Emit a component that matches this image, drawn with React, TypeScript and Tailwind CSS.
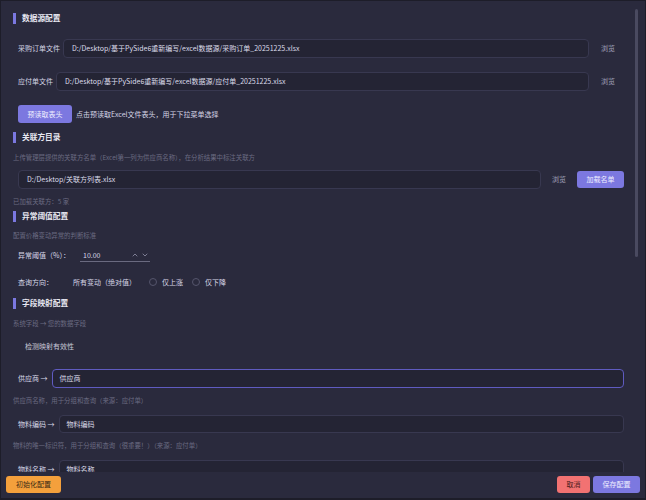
import { ChevronDown, ChevronUp } from 'lucide-react'

const font = { fontFamily: '"Noto Sans CJK SC", "Noto Sans", sans-serif' }

function SectionTitle({ title, className = '' }: { title: string; className?: string }) {
  return (
    <div className={`flex h-[12px] items-center ${className}`}>
      <span className="h-[11px] w-[3px] bg-[#7b78e0]" />
      <span className="ml-[6px] text-[7.7px] font-bold leading-[12px] text-[#e8e8f2]">{title}</span>
    </div>
  )
}

function Desc({ text, className = '' }: { text: string; className?: string }) {
  return <p className={`h-[10px] text-[6.4px] leading-[10px] text-[#6b6b82] ${className}`}>{text}</p>
}

function PathRow({ label, path, className = '' }: { label: string; path: string; className?: string }) {
  return (
    <div className={`ml-[5px] flex h-[19px] items-center ${className}`}>
      <span className="shrink-0 text-[7px] text-[#d4d4e4]">{label}</span>
      <div className="ml-[3px] flex h-[19px] flex-1 items-center rounded-[4px] border border-[#383850] bg-[#242434] pl-[8px] text-[7px] text-[#dcdcea]">
        {path}
      </div>
      <button type="button" className="ml-[3px] w-[32px] text-[7px] text-[#a0a0b8]">浏览</button>
    </div>
  )
}

function MapRow({ label, value, focused, className = '' }: { label: string; value: string; focused?: boolean; className?: string }) {
  return (
    <div className={`ml-[5px] flex h-[18px] items-center ${className}`}>
      <span className="shrink-0 text-[7px] text-[#d8d8e8]">{label} →</span>
      <div
        className={`ml-[4px] flex h-full flex-1 items-center rounded-[4px] border bg-[#242434] pl-[7px] text-[7px] text-[#dcdcea] ${
          focused ? 'border-[#5f5bc0]' : 'border-[#383850]'
        }`}
      >
        {value}
      </div>
    </div>
  )
}

function Radio({ label, className = '' }: { label: string; className?: string }) {
  return (
    <span className={`flex items-center ${className}`}>
      <span className="h-[8px] w-[8px] rounded-full border border-[#55556c]" />
      <span className="ml-[5px]">{label}</span>
    </span>
  )
}

export default function App() {
  return (
    <div style={font} className="flex h-[500px] w-[646px] flex-col overflow-hidden border border-b-2 border-[#1d1d29] bg-[#2a2a3d]">
      <div className="relative h-[471px] shrink-0 overflow-hidden pl-[12px] pr-[21px]">
        {/* scrollbar */}
        <div className="absolute left-[634px] top-[8px] h-[248px] w-[3px] rounded-full bg-[#4a4a60]" />

        <SectionTitle title="数据源配置" className="mt-[11px]" />
        <PathRow className="mt-[15px]" label="采购订单文件" path="D:/Desktop/基于PySide6重新编写/excel数据源/采购订单_20251225.xlsx" />
        <PathRow className="mt-[14px]" label="应付单文件" path="D:/Desktop/基于PySide6重新编写/excel数据源/应付单_20251225.xlsx" />
        <div className="ml-[5px] mt-[14px] flex h-[18px] items-center">
          <button type="button" className="h-[18px] w-[54px] rounded-[3px] bg-[#7c78e0] text-[7px] text-[#eeeeff]">
            预读取表头
          </button>
          <span className="ml-[4px] text-[7px] text-[#d4d4e4]">点击预读取Excel文件表头，用于下拉菜单选择</span>
        </div>

        <SectionTitle title="关联方目录" className="mt-[8px]" />
        <Desc className="mt-[10px]" text="上传管理层提供的关联方名单（Excel第一列为供应商名称），在分析结果中标注关联方" />
        <div className="ml-[5px] mt-[7px] flex h-[19px] items-center">
          <div className="flex h-[19px] flex-1 items-center rounded-[4px] border border-[#383850] bg-[#242434] pl-[8px] text-[7px] text-[#dcdcea]">
            D:/Desktop/关联方列表.xlsx
          </div>
          <button type="button" className="ml-[3px] w-[30px] text-[7px] text-[#a0a0b8]">浏览</button>
          <button type="button" className="ml-[3px] h-[17px] w-[47px] rounded-[3px] bg-[#7c78e0] text-[7px] text-[#eeeeff]">
            加载名单
          </button>
        </div>
        <Desc className="mt-[8px]" text="已加载关联方：5 家" />

        <SectionTitle title="异常阈值配置" className="mt-[3px]" />
        <Desc className="mt-[9px]" text="配置价格变动异常的判断标准" />
        <div className="ml-[5px] mt-[8px] flex h-[13px] items-center text-[7px] text-[#d8d8e8]">
          <span className="w-[62px]">异常阈值（%）：</span>
          <div className="flex h-[13px] w-[70px] items-center border-b border-[#6a6a80] pl-[3px]">
            <span className="flex-1">10.00</span>
            <ChevronUp className="h-[8px] w-[8px] text-[#a8a8c0]" strokeWidth={2} />
            <ChevronDown className="ml-[2px] mr-[1px] h-[8px] w-[8px] text-[#a8a8c0]" strokeWidth={2} />
          </div>
        </div>
        <div className="ml-[5px] mt-[14px] flex h-[12px] items-center text-[7px] text-[#d8d8e8]">
          <span className="w-[55px]">查询方向：</span>
          <span>所有变动（绝对值）</span>
          <Radio label="仅上涨" className="ml-[13px]" />
          <Radio label="仅下降" className="ml-[9px]" />
        </div>

        <SectionTitle title="字段映射配置" className="mt-[9px]" />
        <Desc className="mt-[10px]" text="系统字段 → 您的数据字段" />
        <div className="ml-[12px] mt-[11px] h-[12px] text-[7px] leading-[12px] text-[#c8c8d8]">检测映射有效性</div>
        <MapRow className="mt-[17px] !h-[19px]" label="供应商" value="供应商" focused />
        <Desc className="mt-[8px]" text="供应商名称，用于分组和查询（来源：应付单）" />
        <MapRow className="mt-[9px]" label="物料编码" value="物料编码" />
        <Desc className="mt-[8px]" text="物料的唯一标识符，用于分组和查询（很重要！）（来源：应付单）" />
        <MapRow className="mt-[9px]" label="物料名称" value="物料名称" />
      </div>

      <div className="flex flex-1 items-start justify-between pl-[5px] pr-[5px] pt-[4px]">
        <button type="button" className="h-[17px] w-[55px] rounded-[3px] bg-[#f4a03c] text-[7px] text-[#3b2a14]">
          初始化配置
        </button>
        <div className="flex gap-[3px]">
          <button type="button" className="h-[17px] w-[33px] rounded-[3px] bg-[#f27272] text-[7px] text-[#4a1c1c]">
            取消
          </button>
          <button type="button" className="h-[17px] w-[47px] rounded-[3px] bg-[#7c78e0] text-[7px] text-[#eeeeff]">
            保存配置
          </button>
        </div>
      </div>
    </div>
  )
}
